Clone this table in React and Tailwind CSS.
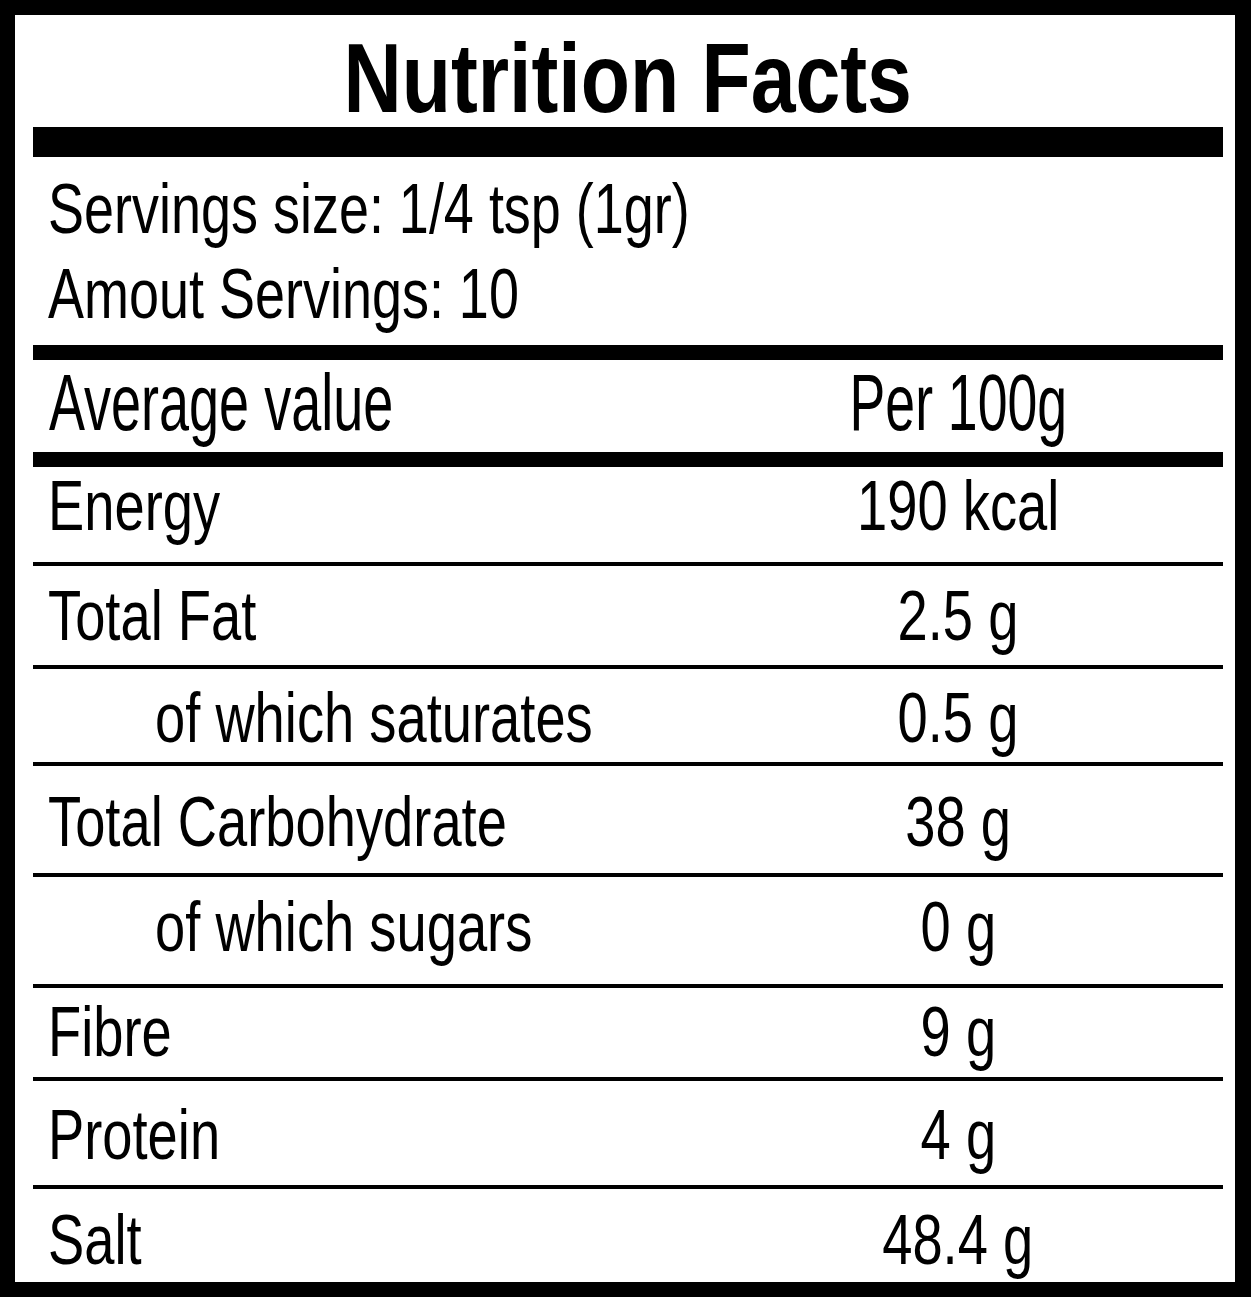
import React from "react";

const FONT = { fontFamily: "'Liberation Sans', Arial, sans-serif" };

const rows = [
  { label: "Energy", value: "190 kcal", cls: "h-[95px] pt-[3px]", indent: false },
  { label: "Total Fat", value: "2.5 g", cls: "h-[99px] pt-[14px]", indent: false },
  { label: "of which saturates", value: "0.5 g", cls: "h-[94px] pt-[13px]", indent: true },
  { label: "Total Carbohydrate", value: "38 g", cls: "h-[107px] pt-[20px]", indent: false },
  { label: "of which sugars", value: "0 g", cls: "h-[107px] pt-[14px]", indent: true },
  { label: "Fibre", value: "9 g", cls: "h-[89px] pt-[8px]", indent: false },
  { label: "Protein", value: "4 g", cls: "h-[104px] pt-[18px]", indent: false },
  { label: "Salt", value: "48.4 g", cls: "h-[93px] pt-[15px]", indent: false },
];

function Row({ row, last }) {
  return (
    <>
      <div className={`grid grid-cols-[660px_1fr] text-[71px] leading-none text-black whitespace-nowrap ${row.cls}`}>
        <div className={row.indent ? "pl-[122px]" : "pl-[15px]"}>
          <span className="inline-block origin-left scale-x-[0.765]">{row.label}</span>
        </div>
        <div className="text-center">
          <span className="inline-block origin-center scale-x-[0.765]">{row.value}</span>
        </div>
      </div>
      {!last && <div className="h-[4px] bg-black" />}
    </>
  );
}

export default function App() {
  return (
    <div className="w-[1251px] h-[1297px] bg-white" style={FONT}>
      <div className="w-full h-full border-[15px] border-r-[16px] border-black bg-white pl-[18px] pr-[12px] flex flex-col">
        <div className="h-[112px] pt-[14px] text-center text-[98px] font-bold leading-none text-black whitespace-nowrap">
          <span className="inline-block origin-center scale-x-[0.822]">Nutrition Facts</span>
        </div>
        <div className="h-[30px] bg-black" />
        <div className="h-[188px] pt-[9px] pl-[15px] text-[71px] leading-[85px] text-black whitespace-nowrap">
          <div>
            <span className="inline-block origin-left scale-x-[0.76]">Servings size: 1/4 tsp (1gr)</span>
          </div>
          <div>
            <span className="inline-block origin-left scale-x-[0.76]">Amout Servings: 10</span>
          </div>
        </div>
        <div className="h-[15px] bg-black" />
        <div className="grid grid-cols-[660px_1fr] h-[92px] pt-[3px] text-[80px] leading-none text-black whitespace-nowrap">
          <div className="pl-[16px]">
            <span className="inline-block origin-left scale-x-[0.675]">Average value</span>
          </div>
          <div className="text-center">
            <span className="inline-block origin-center scale-x-[0.67]">Per 100g</span>
          </div>
        </div>
        <div className="h-[15px] bg-black" />
        {rows.map((r, i) => (
          <Row key={r.label} row={r} last={i === rows.length - 1} />
        ))}
      </div>
    </div>
  );
}
